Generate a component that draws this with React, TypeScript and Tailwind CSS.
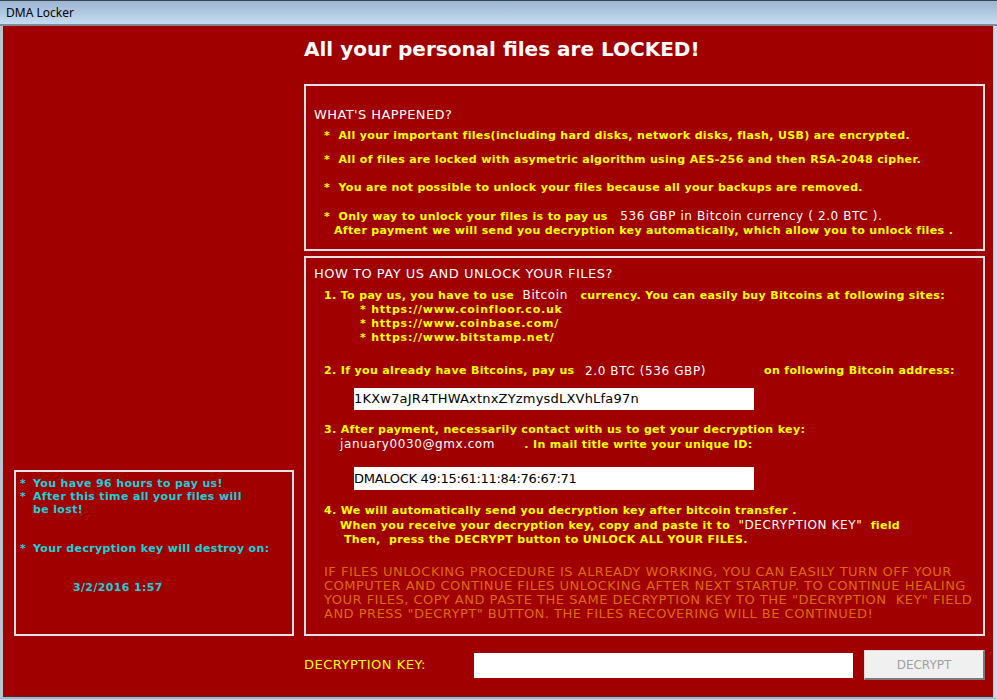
import React from 'react';

const Y = 'text-[#ffff00]';
const W = 'text-white font-normal text-[12px] tracking-[0.6px]';

const App: React.FC = () => {
  return (
    <div className="w-[997px] h-[699px] bg-[#a10000] flex flex-col overflow-hidden" style={{ fontFamily: '"DejaVu Sans", Verdana, sans-serif' }}>
      {/* title bar */}
      <div className="h-[26px] shrink-0 border-t border-[#3c4650] bg-gradient-to-b from-[#9cb5d2] to-[#c5dbf0] border-b-2 border-b-[#7e8c99] flex items-center pl-[6px]">
        <span className="text-[12px] text-black" style={{ fontFamily: '"Noto Sans", "Open Sans", sans-serif' }}>DMA Locker</span>
      </div>

      <div className="flex-1 flex flex-col border-l-[3px] border-l-[#b8c4d0] border-r-[4px] border-r-[#c8d8ea] border-b-[2px] border-b-[#5fd2ea] pl-[11px]">
        <div className="flex items-end gap-[10px]">
          {/* left: timer box */}
          <div className="w-[280px] h-[166px] border-2 border-[#e2e2e2] pl-[4px] pt-[5px] text-[#19d0d8] font-bold text-[11px] leading-[13px] tracking-[0.35px]">
            <div className="flex"><span className="w-[13px]">*</span><span>You have 96 hours to pay us!</span></div>
            <div className="flex"><span className="w-[13px] shrink-0">*</span><span>After this time all your files will<br />be lost!</span></div>
            <div className="flex mt-[26px]"><span className="w-[13px]">*</span><span>Your decryption key will destroy on:</span></div>
            <div className="mt-[26px] pl-[53px]">3/2/2016 1:57</div>
          </div>

          {/* right column */}
          <div className="w-[681px] flex flex-col">
            <div className="h-[58px] pt-[11px] text-white font-bold text-[20px] leading-[24px]">All your personal files are LOCKED!</div>

            <div className="h-[167px] border-2 border-[#e2e2e2] pl-[8px] pt-[22px] text-[11px] leading-[14px] font-bold tracking-[0.35px]">
              <div className="text-white font-normal text-[13px] tracking-[0.4px]">WHAT'S HAPPENED?</div>
              <div className={`${Y} mt-[7px] pl-[10px] whitespace-pre`}>*  All your important files(including hard disks, network disks, flash, USB) are encrypted.</div>
              <div className={`${Y} mt-[10px] pl-[10px] whitespace-pre`}>*  All of files are locked with asymetric algorithm using AES-256 and then RSA-2048 cipher.</div>
              <div className={`${Y} mt-[14px] pl-[10px] whitespace-pre`}>*  You are not possible to unlock your files because all your backups are removed.</div>
              <div className={`${Y} mt-[14px] pl-[10px] whitespace-pre`}>*  Only way to unlock your files is to pay us   <span className={W}>536 GBP in Bitcoin currency ( 2.0 BTC ).</span></div>
              <div className={`${Y} pl-[20px]`}>After payment we will send you decryption key automatically, which allow you to unlock files .</div>
            </div>

            <div className="h-[380px] mt-[5px] border-2 border-[#e2e2e2] pl-[8px] pt-[9px] text-[11px] leading-[14px] font-bold tracking-[0.35px]">
              <div className="text-white font-normal text-[13px] tracking-[0.5px]">HOW TO PAY US AND UNLOCK YOUR FILES?</div>
              <div className={`${Y} mt-[7px] pl-[10px] whitespace-pre`}>1. To pay us, you have to use  <span className={W}>Bitcoin</span>   currency. You can easily buy Bitcoins at following sites:</div>
              <div className={`${Y} pl-[46px] whitespace-pre tracking-[0.8px]`}>* https://www.coinfloor.co.uk</div>
              <div className={`${Y} pl-[46px] whitespace-pre tracking-[0.8px]`}>* https://www.coinbase.com/</div>
              <div className={`${Y} pl-[46px] whitespace-pre tracking-[0.8px]`}>* https://www.bitstamp.net/</div>
              <div className={`${Y} mt-[19px] pl-[10px] flex whitespace-pre`}>
                <span className="w-[261px]">2. If you already have Bitcoins, pay us </span>
                <span className={`${W} w-[179px]`}>2.0 BTC (536 GBP)</span>
                <span>on following Bitcoin address:</span>
              </div>
              <div className="mt-[10px] ml-[40px] w-[400px] h-[22px] bg-white flex items-center text-black font-normal text-[13px] tracking-[0.2px]">1KXw7aJR4THWAxtnxZYzmysdLXVhLfa97n</div>
              <div className={`${Y} mt-[13px] pl-[10px]`}>3. After payment, necessarily contact with us to get your decryption key:</div>
              <div className={`${Y} pl-[26px] whitespace-pre`}><span className={W}>january0030@gmx.com</span>       . In mail title write your unique ID:</div>
              <div className="mt-[15px] ml-[40px] w-[400px] h-[23px] bg-white flex items-center text-black font-normal text-[13px] tracking-[-0.3px]">DMALOCK 49:15:61:11:84:76:67:71</div>
              <div className={`${Y} mt-[14px] pl-[10px]`}>4. We will automatically send you decryption key after bitcoin transfer .</div>
              <div className={`${Y} pl-[26px] whitespace-pre`}>When you receive your decryption key, copy and paste it to  <span className={W}>"DECRYPTION KEY"</span>  field</div>
              <div className={`${Y} pl-[30px] whitespace-pre`}>Then,  press the DECRYPT button to UNLOCK ALL YOUR FILES.</div>
              <div className="mt-[18px] pl-[10px] text-[#df6a00] font-normal text-[13px] leading-[14px] tracking-[0.5px]">
                <div>IF FILES UNLOCKING PROCEDURE IS ALREADY WORKING, YOU CAN EASILY TURN OFF YOUR</div>
                <div>COMPUTER AND CONTINUE FILES UNLOCKING AFTER NEXT STARTUP. TO CONTINUE HEALING</div>
                <div className="whitespace-pre">YOUR FILES, COPY AND PASTE THE SAME DECRYPTION KEY TO THE "DECRYPTION  KEY" FIELD</div>
                <div>AND PRESS "DECRYPT" BUTTON. THE FILES RECOVERING WILL BE CONTINUED!</div>
              </div>
            </div>
          </div>
        </div>

        {/* bottom bar */}
        <div className="flex items-center pl-[290px] mt-[14px]">
          <span className={`${Y} text-[13px] tracking-[0.5px] w-[170px]`}>DECRYPTION KEY:</span>
          <div className="w-[379px] h-[25px] bg-white"></div>
          <button className="ml-[11px] w-[121px] h-[30px] bg-[#f0f0f0] border border-[#d8d8d8] border-r-2 border-b-2 border-r-[#7a7a7a] border-b-[#7a7a7a] text-[#a0a0a0] text-[12px]" style={{ fontFamily: '"DejaVu Sans", sans-serif' }}>DECRYPT</button>
        </div>
      </div>
    </div>
  );
};

export default App;
